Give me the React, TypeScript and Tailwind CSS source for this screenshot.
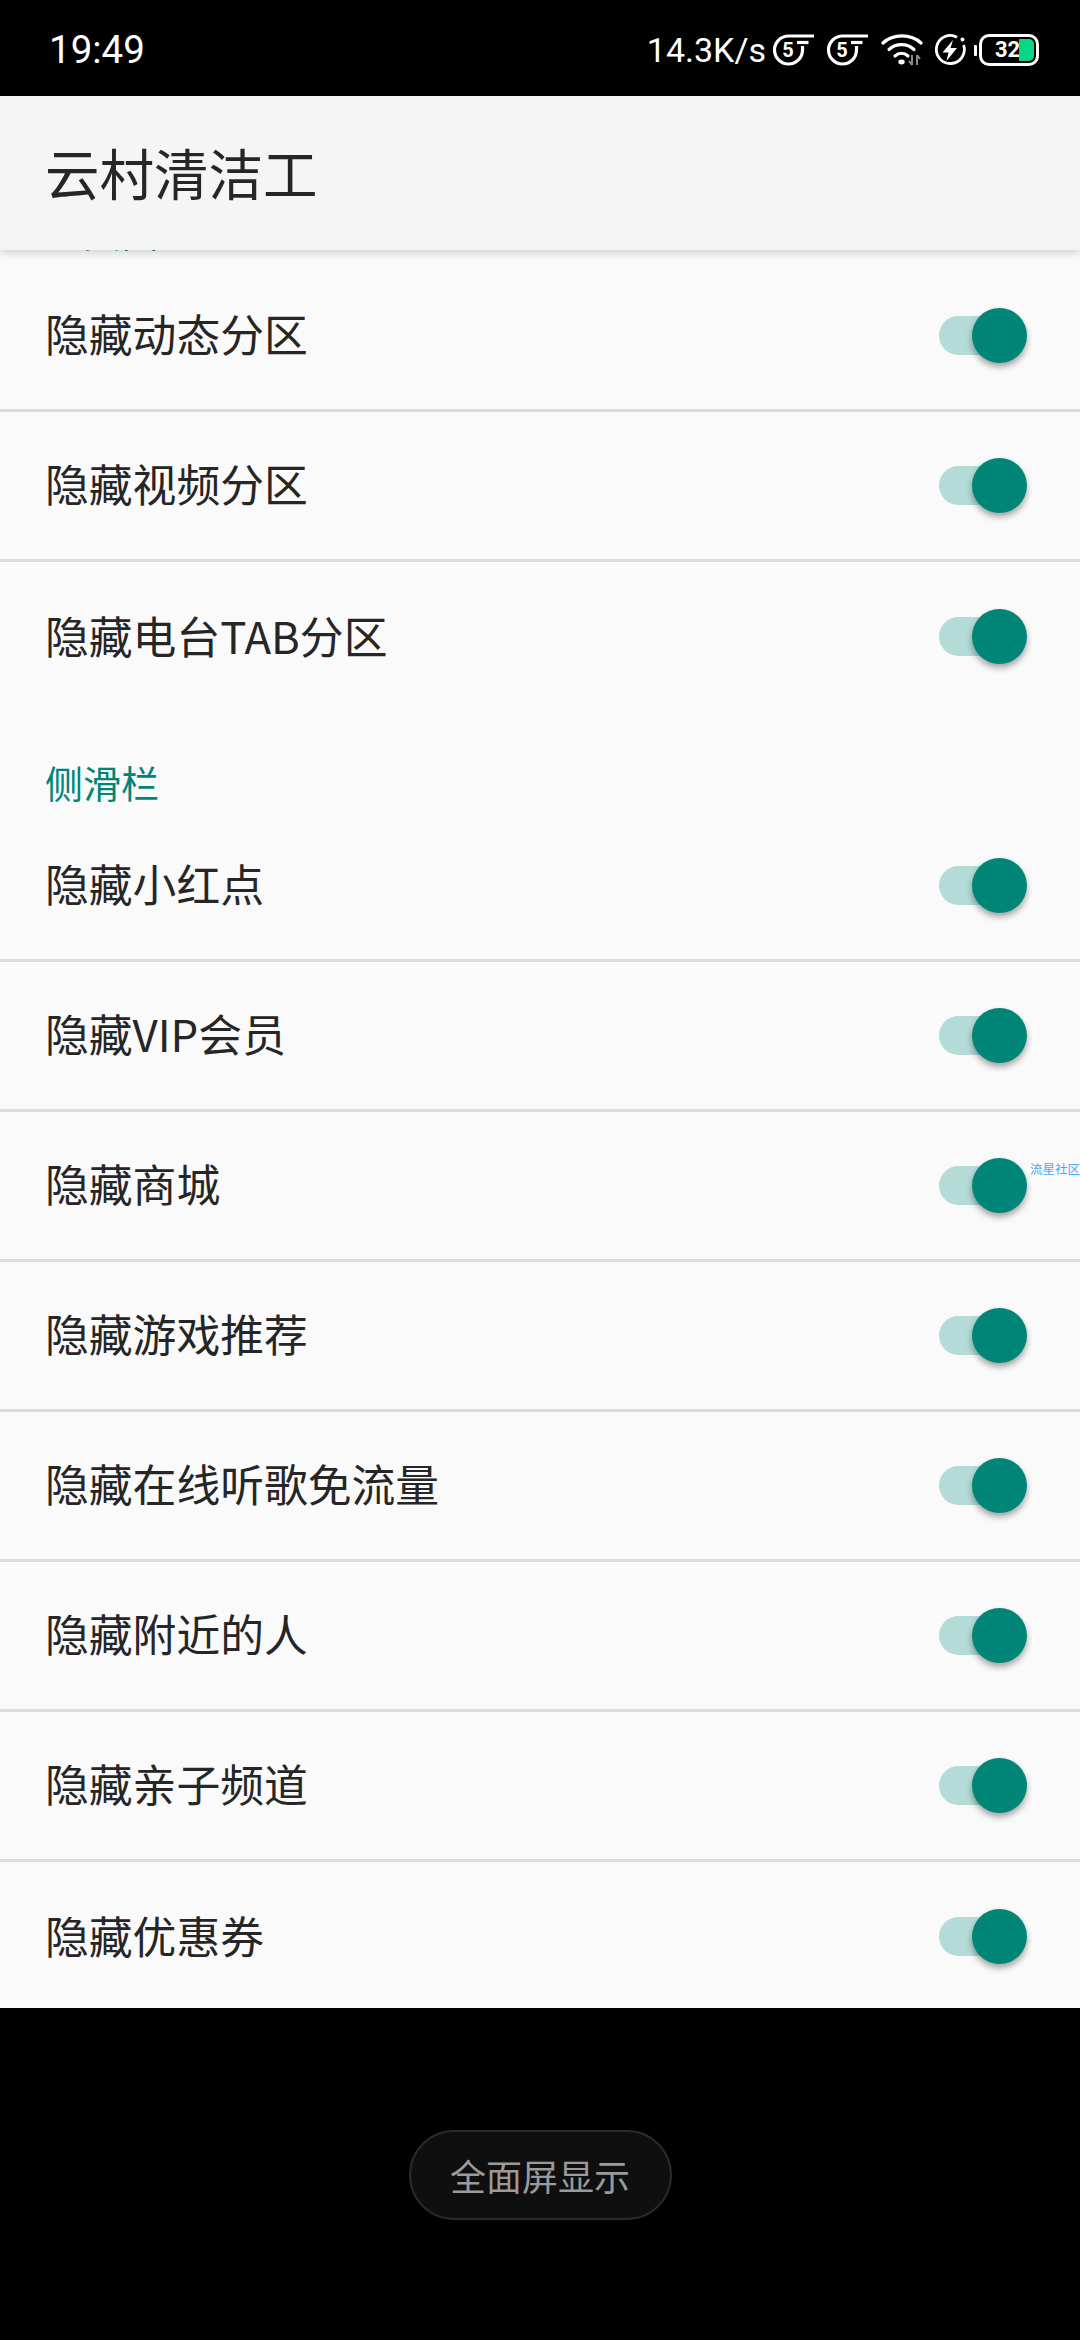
import React from 'react';

const FONT = "font-['Noto_Sans_CJK_SC','Noto_Sans',sans-serif]";

function SimIcon() {
  return (
    <svg width="42" height="32" viewBox="0 0 42 32" fill="none" stroke="white" strokeWidth="3.2" className="shrink-0">
      <path d="M41 2H15.5A14 14 0 1 0 29.5 16V12" />
      <path d="M24 8.5H35.5" />
      <text x="15" y="22.5" fill="white" stroke="none" fontSize="20" fontWeight="700" textAnchor="middle" fontFamily="Roboto">5</text>
    </svg>
  );
}

function WifiIcon() {
  return (
    <svg width="42" height="32" viewBox="0 0 42 32" fill="none" className="shrink-0">
      <g stroke="white" strokeWidth="3.2" strokeLinecap="round">
        <path d="M2 9C12 -0.5 30 -0.5 40 9" />
        <path d="M8 15.5C15 9 26 9 33 15.5" />
        <path d="M14 22C18 18.5 23 18.5 27 22" />
      </g>
      <ellipse cx="20.5" cy="28" rx="3.2" ry="2.4" fill="white" />
      <path d="M31 21V31M28 27L31 31M36 31V21M36 21L39 25" stroke="#8a8a8a" strokeWidth="2" />
    </svg>
  );
}

function ChargeIcon() {
  return (
    <svg width="32" height="32" viewBox="0 0 32 32" fill="none" className="shrink-0">
      <path d="M23 3.2A14 14 0 1 0 29.6 11" stroke="white" strokeWidth="2.8" />
      <circle cx="28.5" cy="5.5" r="2" fill="white" />
      <path d="M19 6L8.5 18.5H14.5L12.5 27L23 14H16.5Z" fill="white" />
    </svg>
  );
}

function BatteryIcon() {
  return (
    <div className="flex items-center gap-[2px] shrink-0">
      <div className="w-[3px] h-[11px] bg-white rounded-[1px]" />
      <div className="relative w-[60px] h-[32px] border-[3px] border-white rounded-[10px] flex items-center pl-[13px]">
        <span className="font-['Roboto',sans-serif] font-bold text-[22px] leading-none text-white">32</span>
        <div className="absolute right-[2px] top-[2px] bottom-[2px] w-[15px] bg-[#05d687] rounded-r-[5px]" />
      </div>
    </div>
  );
}

function StatusBar() {
  return (
    <div className="h-[96px] bg-black flex items-center justify-between pl-[49px] pr-[41px] pt-[4px] shrink-0 font-['Roboto',sans-serif] text-white">
      <span className="text-[38.5px] leading-none">19:49</span>
      <div className="flex items-center">
        <span className="text-[34px] leading-none mr-[7px]">14.3K/s</span>
        <SimIcon />
        <div className="w-[12px]" />
        <SimIcon />
        <div className="w-[12px]" />
        <WifiIcon />
        <div className="w-[11px]" />
        <ChargeIcon />
        <div className="w-[8px]" />
        <BatteryIcon />
      </div>
    </div>
  );
}

function Toggle() {
  return (
    <div className="relative w-[88px] h-[56px] shrink-0">
      <div className="absolute left-0 top-[8px] w-[80px] h-[39px] rounded-full bg-[#b4dbd7]" />
      <div className="absolute left-[33px] top-0 w-[55px] h-[55px] rounded-full bg-[#008577] shadow-[0_4px_6px_rgba(0,0,0,0.35)]" />
    </div>
  );
}

function Row({ label, divider = true, badge }: { label: string; divider?: boolean; badge?: string }) {
  return (
    <div className={`relative h-[150px] flex items-center justify-between pl-[45px] pr-[53px] ${divider ? 'border-b-[3px] border-[#dcdcdc]' : ''}`}>
      <span className="text-[43.8px] leading-none text-[#262626] mb-[3px]">{label}</span>
      <Toggle />
      {badge && (
        <span className="absolute right-0 top-[51px] text-[12.5px] leading-none text-[#4aa8f5]">{badge}</span>
      )}
    </div>
  );
}

export default function App() {
  const first = ['隐藏动态分区', '隐藏视频分区', '隐藏电台TAB分区'];
  const second = ['隐藏小红点', '隐藏VIP会员', '隐藏商城', '隐藏游戏推荐', '隐藏在线听歌免流量', '隐藏附近的人', '隐藏亲子频道', '隐藏优惠券'];

  return (
    <div className={`w-[1080px] h-[2340px] bg-black flex flex-col overflow-hidden ${FONT}`}>
      <StatusBar />
      <div className="relative z-10 h-[154px] bg-[#f5f5f5] flex items-center pl-[45px] shrink-0 shadow-[0_3px_8px_rgba(0,0,0,0.16)]">
        <h1 className="text-[54.5px] leading-none text-[#262626] mb-[2px]">云村清洁工</h1>
      </div>
      <div className="h-[1758px] bg-[#fafafa] overflow-hidden shrink-0">
        {/* section label scrolled almost fully under the app bar */}
        <div className="-mt-[38px] h-[50px] pl-[45px] text-[38px] leading-[38px] text-[#008577]">主页面</div>
        {first.map((label, i) => (
          <Row key={label} label={label} divider={i < first.length - 1} />
        ))}
        <div className="h-[100px] pt-[51px] pl-[45px] text-[38px] leading-[38px] text-[#008577]">侧滑栏</div>
        {second.map((label, i) => (
          <Row key={label} label={label} divider={i < second.length - 1} badge={label === '隐藏商城' ? '流星社区' : undefined} />
        ))}
      </div>
      <div className="flex-1 flex items-center justify-center pt-[1px]">
        <div className="w-[263px] h-[90px] rounded-full bg-[#0f0f0f] border-2 border-[#2a2a2a] flex items-center justify-center text-[36px] leading-none text-[#9a9a9a]">
          全面屏显示
        </div>
      </div>
    </div>
  );
}
